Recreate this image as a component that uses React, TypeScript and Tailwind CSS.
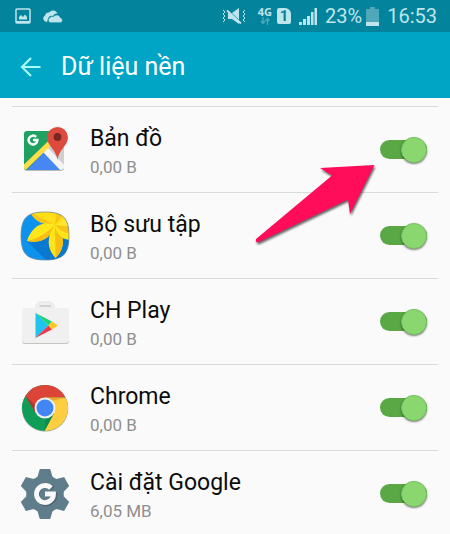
import { useState, type ReactNode } from "react";

function GoogleG({ x, y, r, width }: { x: number; y: number; r: number; width: number }) {
  const d = r * 0.707;
  return (
    <path
      d={`M${x + d} ${y - d}A${r} ${r} 0 1 0 ${x + r} ${y}H${x}`}
      fill="none"
      stroke="#fafafa"
      strokeWidth={width}
    />
  );
}

function MapsIcon() {
  return (
    <svg viewBox="0 0 48 50" className="h-[50px] w-12" aria-hidden="true">
      <defs>
        <clipPath id="maps-tile">
          <rect x="3" y="6" width="40" height="39" rx="3" />
        </clipPath>
      </defs>
      <rect x="3" y="7" width="40" height="39" rx="3" fill="#b9b9b9" />
      <g clipPath="url(#maps-tile)">
        <rect x="3" y="6" width="40" height="39" fill="#1fa162" />
        <path d="M24 24 44 6V46Z" fill="#cfcfcf" />
        <path d="M3 48 24 26 43 47Z" fill="#4687f1" />
        <path d="M22 27 26 22 46 43 41 47Z" fill="#f4f4f4" />
        <path d="M1 45 33 14" stroke="#ffde48" strokeWidth="5" />
      </g>
      <GoogleG x={12} y={15} r={4.4} width={2.5} />
      <path
        d="M36.500 35C35.500 25 26 20.500 26 12.500a10.500 10.500 0 0 1 21 0C47 20.500 37.500 25 36.500 35Z"
        fill="#dc4b3e"
      />
      <circle cx="36.500" cy="12" r="3.900" fill="#7c2620" />
    </svg>
  );
}

function GalleryIcon() {
  return (
    <svg viewBox="0 0 50 50" className="size-[50px]" aria-hidden="true">
      <defs>
        <clipPath id="gallery-tile">
          <path d="M25 1C43 1 49 7 49 25S43 49 25 49 1 43 1 25 7 1 25 1Z" />
        </clipPath>
      </defs>
      <g clipPath="url(#gallery-tile)">
        <rect width="50" height="50" fill="#0d92ee" />
        <path d="M7 30 28 51H50V20L35 14Z" fill="#0879cf" />
        <path d="M35 14C26 14 15 12 10 0H35Z" fill="#ffdf16" />
        <path d="M35 14C26 14 15 12 10 1Z" fill="#fac514" />
        <path d="M35 14C21 9 11 17 7 30 20 33 32 27 35 14Z" fill="#ffe71c" />
        <path d="M35 14C28 21 20 27 7 30 20 33 32 27 35 14Z" fill="#f8bd12" />
        <path d="M35 14C26 26 27 38 35.500 47 45 38 46 25 35 14Z" fill="#ffe41a" />
        <path d="M35 14 35.500 47C45 38 46 25 35 14Z" fill="#f8bd12" />
        <path d="M35 14C36 23 42 29 51 29V14Z" fill="#ffe41a" />
        <path d="M35 14C39 19 44 22 51 23V12Z" fill="#f9c514" />
        <path d="M35 14 28-1H51V15Z" fill="#ffdc18" />
        <path d="M35 14 37-1 46 0Z" fill="#f9c514" />
        <path d="M35 14 51 4V15Z" fill="#ffe72e" />
      </g>
      <path
        d="M25 1C43 1 49 7 49 25S43 49 25 49 1 43 1 25 7 1 25 1Z"
        fill="none"
        stroke="#6d8795"
        strokeOpacity=".7"
      />
    </svg>
  );
}

function PlayStoreIcon() {
  return (
    <svg viewBox="0 0 50 46" className="h-[46px] w-[50px]" aria-hidden="true">
      <path d="M16 10V6.500L19 3H31L34 6.500V10" fill="#efefef" stroke="#e6e6e6" />
      <path d="M19.500 7H31" stroke="#c9c9c9" strokeWidth="1.500" />
      <rect x="2" y="10" width="47" height="35" rx="3" fill="#c4c4c4" />
      <rect x="2" y="9" width="47" height="35" rx="3" fill="#f0f0f0" />
      <path d="M15.500 14 28.500 26.500 15.500 39Z" fill="#20c3ee" />
      <path d="M15.500 14 32 22.500 28.500 26.500Z" fill="#20d17c" />
      <path d="M15.500 39 32 30.500 28.500 26.500Z" fill="#f0364c" />
      <path d="M32 22.500 38 26.500 32 30.500 28.500 26.500Z" fill="#ffc71f" />
    </svg>
  );
}

function ChromeIcon() {
  return (
    <svg viewBox="0 0 48 48" className="size-12" aria-hidden="true">
      <circle cx="24" cy="24.500" r="23.300" fill="#b5b5b5" />
      <circle cx="24" cy="24" r="23" fill="#0f9d58" />
      <path d="M24 13.500H44.500A23 23 0 0 1 23.500 47L33 29.500Z" fill="#ffcd40" />
      <path d="M24 13.500H44.500A23 23 0 0 0 4.500 12L14.500 29Z" fill="#db4437" />
      <path d="M24 13.500H44.500L31 17Z" fill="#e6a62f" />
      <path d="M4.500 12 14.500 29 15 22Z" fill="#a93830" />
      <path d="M33 29.500 23.500 47 25 33Z" fill="#0a7d46" opacity=".5" />
      <circle cx="24" cy="24" r="10.500" fill="#f1f1f1" />
      <circle cx="24" cy="24" r="8.500" fill="#4285f4" />
    </svg>
  );
}

function GoogleSettingsIcon() {
  return (
    <svg viewBox="0 0 50 52" className="h-[52px] w-[50px]" aria-hidden="true">
      <g fill="#607d8b" stroke="#607d8b" strokeLinejoin="round" strokeWidth="2">
        <circle cx="25" cy="26" r="17.500" />
        {[0, 60, 120, 180, 240, 300].map((angle) => (
          <path key={angle} d="M16 11.500 18.500 9 20.500 2H29.500L31.500 9 34 11.500Z" transform={`rotate(${angle} 25 26)`} />
        ))}
      </g>
      <g opacity=".25" transform="translate(1 1)">
        <path d="M31.500 19.500A9 9 0 1 0 34 26H25" fill="none" stroke="#102027" strokeWidth="5" />
      </g>
      <GoogleG x={25} y={26} r={8.5} width={4.8} />
    </svg>
  );
}

function StatusBar() {
  return (
    <div className="flex h-8 items-center bg-[#03839c] pr-[13px] pl-[15px] text-[#bfe5ec]">
      <svg viewBox="0 0 16 16" className="size-4" aria-label="Ảnh chụp màn hình" role="img">
        <rect x="1" y="1" width="14" height="14" rx="1" fill="none" stroke="currentColor" strokeWidth="1.500" />
        <path d="M1 14H15" stroke="currentColor" strokeWidth="2" />
        <path d="M4 11.500V9L6 7 8 9 10 6.500 12 9V11.500Z" fill="currentColor" />
      </svg>
      <svg viewBox="0 0 20 13" className="ml-3 h-[13px] w-5" aria-label="OneDrive" role="img">
        <path
          d="M4 12A3.500 3.500 0 0 1 2 5.500 4 4 0 0 1 6 2.500 5 5 0 0 1 14.500 3.500 4 4 0 0 0 10 6 3.500 3.500 0 0 0 5 9Z"
          fill="currentColor"
        />
        <path
          d="M7.500 12.700A2.700 2.700 0 0 1 7 7.500 3.300 3.300 0 0 1 10.500 6.500 4 4 0 0 1 17.500 7.800 2.500 2.500 0 0 1 17.500 12.700Z"
          fill="currentColor"
          stroke="#03839c"
          strokeWidth=".6"
        />
      </svg>

      <div className="ml-auto flex items-center">
        <svg viewBox="0 0 24 18" className="h-[18px] w-6" aria-label="Rung" role="img">
          <path d="M6 6H10L17 1V17L10 12H6Z" fill="currentColor" />
          <path d="M5 2.500 19 15.500" stroke="#03839c" strokeWidth="1.500" />
          <path d="M5 3.500 19 16.500" stroke="currentColor" strokeWidth="1.800" />
          <path
            d="M1 3 3 5 1 7 3 9 1 11 3 13 1 15M23 3 21 5 23 7 21 9 23 11 21 13 23 15"
            fill="none"
            stroke="currentColor"
          />
        </svg>
        <div className="ml-3 flex flex-col items-center">
          <span className="font-['Open_Sans',sans-serif] text-[11px] leading-[10px] font-bold">4G</span>
          <svg viewBox="0 0 10 8" className="h-2 w-2.5" aria-hidden="true">
            <path
              d="M3 0V6M1 4 3 6.500 5 4M7.500 8V2M5.500 4 7.500 1.500 9.500 4"
              fill="none"
              stroke="#4ea8ba"
              strokeWidth="1.300"
            />
          </svg>
        </div>
        <span className="ml-[5px] flex h-4 w-3.5 items-center justify-center rounded-xs rounded-tr-md bg-[#bfe5ec] text-[15px] leading-4 font-bold text-[#03839c]">
          1
        </span>
        <svg viewBox="0 0 18 17" className="ml-2 h-[17px] w-[18px]" aria-label="Tín hiệu" role="img">
          <path d="M0 14H3V17H0ZM4 11H7V17H4ZM8 8H11V17H8ZM12 4H14.500V17H12ZM15.500 0H18V17H15.500Z" fill="currentColor" />
        </svg>
        <span className="ml-2 text-[20px] leading-6">23%</span>
        <svg viewBox="0 0 13 19" className="ml-1 h-[19px] w-[13px]" aria-label="Pin" role="img">
          <path d="M4 0H9V2H13V19H0V2H4Z" fill="#4ea8ba" />
          <path d="M0 15H13V19H0Z" fill="currentColor" />
        </svg>
        <time className="ml-2 text-[20px] leading-6">16:53</time>
      </div>
    </div>
  );
}

function AppRow({ id, name, usage, icon }: { id: string; name: string; usage: string; icon: ReactNode }) {
  const [on, setOn] = useState(true);
  return (
    <li className="flex h-[86px] items-center border-t border-[#dadada] pr-[11px] pl-2">
      <span className="flex w-[50px] shrink-0 justify-center">{icon}</span>
      <label htmlFor={id} className="ml-5 min-w-0 flex-1 pt-0.5">
        <span className="block text-[23px] leading-8 text-[#0c0c0c]">{name}</span>
        <span className="block text-[17px] leading-6 text-[#8f8f8f]">{usage}</span>
      </label>
      <input
        id={id}
        type="checkbox"
        role="switch"
        checked={on}
        onChange={() => setOn(!on)}
        className="flex h-[19px] w-[47px] shrink-0 appearance-none items-center rounded-full bg-[#bdbdbd] before:size-[26px] before:shrink-0 before:rounded-full before:border before:border-[#d5d5d5] before:bg-[#f1f1f1] before:shadow-[0_1px_2px_rgba(0,0,0,0.5)] before:content-[''] checked:justify-end checked:bg-[#59a845] checked:before:border-[#75c35e] checked:before:bg-[#89d76e]"
      />
    </li>
  );
}

const apps = [
  { id: "maps", name: "Bản đồ", usage: "0,00 B", icon: <MapsIcon /> },
  { id: "gallery", name: "Bộ sưu tập", usage: "0,00 B", icon: <GalleryIcon /> },
  { id: "play", name: "CH Play", usage: "0,00 B", icon: <PlayStoreIcon /> },
  { id: "chrome", name: "Chrome", usage: "0,00 B", icon: <ChromeIcon /> },
  { id: "google", name: "Cài đặt Google", usage: "6,05 MB", icon: <GoogleSettingsIcon /> },
];

export default function App() {
  return (
    <div className="flex h-screen flex-col overflow-hidden bg-[#fafafa] font-[Roboto,sans-serif]">
      <StatusBar />
      <header className="flex h-[66px] shrink-0 items-center bg-[#00a4c4] px-5 pt-1 text-white">
        <button type="button" aria-label="Quay lại" className="text-[#a9fbf5]">
          <svg viewBox="0 0 21 20" className="h-5 w-[21px]" aria-hidden="true">
            <path d="M20.500 10H2M11 1 2 10 11 19" fill="none" stroke="currentColor" strokeWidth="2.200" />
          </svg>
        </button>
        <h1 className="ml-5 text-[25px] leading-8">Dữ liệu nền</h1>
      </header>
      <main className="relative min-h-0 flex-1 overflow-hidden pt-2">
        <ul className="mx-3">
          {apps.map((app) => (
            <AppRow key={app.id} {...app} />
          ))}
        </ul>
        <svg
          viewBox="0 0 130 90"
          className="pointer-events-none absolute top-[62px] right-[70px] h-[90px] w-[130px] drop-shadow-[1px_2px_1px_rgba(0,0,0,0.6)]"
          aria-hidden="true"
        >
          <path d="M6 79 82 15.500 70 8 124.500 5 100 54 98 39.500 9 82Q5 83 6 79Z" fill="#ff0d5b" />
        </svg>
      </main>
    </div>
  );
}
